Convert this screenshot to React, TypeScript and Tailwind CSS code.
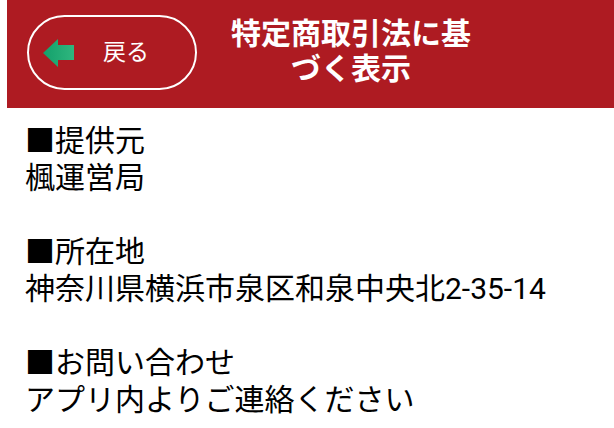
import React from "react";

const FONT = 'Roboto, "Noto Sans CJK JP", sans-serif';

// Green back arrow inside the pill button
function BackArrow() {
  return (
    <svg width="31" height="28" viewBox="0 0 31 28" className="shrink-0">
      <defs>
        <linearGradient id="arrowGrad" x1="0" y1="0" x2="1" y2="0">
          <stop offset="0" stopColor="#13a06b" />
          <stop offset="1" stopColor="#2fb67e" />
        </linearGradient>
      </defs>
      <path d="M0 14 L15 0 L15 6 L31 6 L31 21 L15 21 L15 28 Z" fill="url(#arrowGrad)" />
    </svg>
  );
}

const SECTIONS: { title: string; body: string }[] = [
  { title: "■提供元", body: "楓運営局" },
  { title: "■所在地", body: "神奈川県横浜市泉区和泉中央北2-35-14" },
  { title: "■お問い合わせ", body: "アプリ内よりご連絡ください" },
];

export default function App() {
  return (
    <div className="min-h-screen w-[614px] bg-white" style={{ fontFamily: FONT }}>
      {/* Header bar */}
      <div className="ml-[7px] flex h-[108px] items-start bg-[#ae1b22]">
        <button className="ml-[20px] mt-[15px] flex h-[75px] w-[170px] shrink-0 items-center rounded-full border-2 border-white pl-[14px]">
          <BackArrow />
          <span className="ml-[29px] text-[23px] leading-none text-white">戻る</span>
        </button>
        <h1 className="ml-[24px] mt-[16px] w-[260px] text-center text-[30px] font-bold leading-[35px] text-white">
          特定商取引法に基づく表示
        </h1>
      </div>

      {/* Content */}
      <div className="pl-[25px] pt-[14px] text-[30px] leading-[37px] text-black">
        {SECTIONS.map((s, i) => (
          <div key={s.title} className={i > 0 ? "mt-[37px]" : ""}>
            <div>{s.title}</div>
            <div>{s.body}</div>
          </div>
        ))}
      </div>
    </div>
  );
}
